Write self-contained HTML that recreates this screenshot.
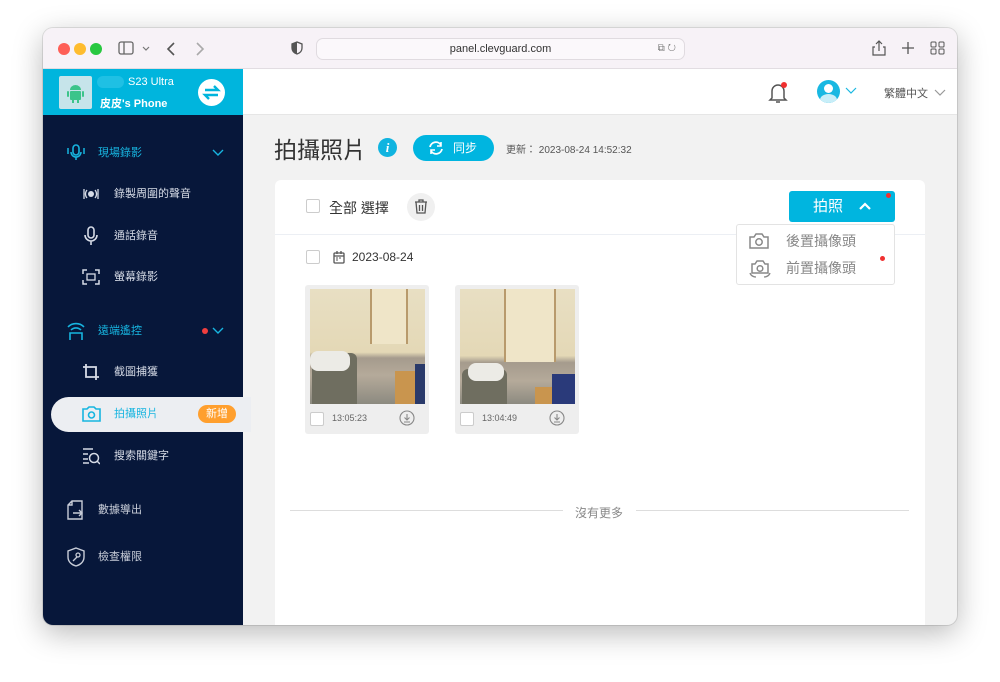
<!DOCTYPE html>
<html><head><meta charset="utf-8"><style>
*{box-sizing:border-box;margin:0;padding:0}
body{width:1000px;height:682px;background:#fff;font-family:"Liberation Sans","Noto Sans CJK TC",sans-serif;position:relative;overflow:hidden}
.win{position:absolute;left:43px;top:28px;width:914px;height:597px;border-radius:10px;overflow:hidden;box-shadow:0 8px 30px rgba(0,0,0,.28),0 0 0 1px rgba(0,0,0,.1);background:#f2f2f2}
.tb{position:absolute;left:0;top:0;width:914px;height:41px;background:#f7f2f7;border-bottom:1px solid #e2dde2}
.dot{position:absolute;top:15px;width:12px;height:12px;border-radius:50%}
.url{position:absolute;left:273px;top:10px;width:369px;height:22px;border:1px solid #e0dbe0;border-radius:7px;background:#fbf8fb;font-size:11px;color:#333;text-align:center;line-height:20px}
.side{position:absolute;left:0;top:41px;width:200px;height:556px;background:#07173a}
.shead{position:absolute;left:0;top:0;width:200px;height:46px;background:#00b5dd}
.ab{position:absolute;color:#fff;font-size:12px}
.mi{position:absolute;left:0;width:200px;height:20px;font-size:11px;color:#d6dbe6;line-height:20px}
.mi svg{position:absolute}
.main{position:absolute;left:200px;top:41px;width:714px;height:556px}
.hdr{position:absolute;left:0;top:0;width:714px;height:46px;background:#fff;border-bottom:1px solid #e6e6e6}
.card{position:absolute;left:32px;top:111px;width:650px;height:460px;background:#fff;border-radius:6px}
.cb{position:absolute;width:14px;height:14px;border:1px solid #ccc;border-radius:2px;background:#fff}
.ph{position:absolute;top:105px;width:124px;height:149px;background:#eeeeee;border-radius:3px}
.img{position:absolute;left:5px;top:4px;width:115px;height:115px;overflow:hidden;background:#e7dcc0}
</style></head><body>
<div class="win">
 <div class="tb">
  <div class="dot" style="left:15px;background:#fe5f57"></div>
  <div class="dot" style="left:31px;background:#febc2e"></div>
  <div class="dot" style="left:47px;background:#28c840"></div>
  <svg style="position:absolute;left:75px;top:13px" width="34" height="16"><rect x="1" y="1" width="14" height="12" rx="2" fill="none" stroke="#666" stroke-width="1.3"/><line x1="6" y1="1" x2="6" y2="13" stroke="#666" stroke-width="1.3"/><path d="M25 6l3 3 3-3" fill="none" stroke="#777" stroke-width="1.2"/></svg>
  <svg style="position:absolute;left:122px;top:13px" width="40" height="16"><path d="M9 2L3 8l6 6" fill="none" stroke="#555" stroke-width="1.6"/><path d="M32 2l6 6-6 6" fill="none" stroke="#aaa" stroke-width="1.6"/></svg>
  <svg style="position:absolute;left:248px;top:13px" width="12" height="14"><path d="M6 1L1 3v4c0 3 2 5 5 6 3-1 5-3 5-6V3z" fill="none" stroke="#555" stroke-width="1.3"/><path d="M6 1v12c-3-1-5-3-5-6V3z" fill="#555"/></svg>
  <div class="url">panel.clevguard.com<span style="position:absolute;right:8px;top:0;color:#777;font-size:10px">⧉ ↻</span></div>
  <svg style="position:absolute;left:828px;top:11px" width="80" height="18"><path d="M8 2v10M5 5l3-3 3 3M4 8H2v8h12V8h-2" fill="none" stroke="#555" stroke-width="1.2"/><path d="M37 3v12M31 9h12" stroke="#555" stroke-width="1.3"/><rect x="60" y="3" width="5" height="5" rx="1" fill="none" stroke="#555"/><rect x="68" y="3" width="5" height="5" rx="1" fill="none" stroke="#555"/><rect x="60" y="10" width="5" height="5" rx="1" fill="none" stroke="#555"/><rect x="68" y="10" width="5" height="5" rx="1" fill="none" stroke="#555"/></svg>
 </div>
 <div class="side">
  <div class="shead">
   <div style="position:absolute;left:16px;top:7px;width:33px;height:33px;background:#c6e4ea;border-radius:2px"><svg width="33" height="33"><path d="M11 14a5.5 5 0 0 1 11 0z" fill="#3cc48a"/><rect x="11" y="15" width="11" height="9" rx="1" fill="#3cc48a"/><rect x="8" y="15" width="2" height="6" rx="1" fill="#3cc48a"/><rect x="23" y="15" width="2" height="6" rx="1" fill="#3cc48a"/><rect x="13" y="23" width="2" height="4" fill="#3cc48a"/><rect x="18" y="23" width="2" height="4" fill="#3cc48a"/></svg></div>
   <div style="position:absolute;left:54px;top:7px;width:27px;height:12px;background:#1fc0e4;border-radius:6px"></div>
   <div class="ab" style="left:85px;top:7px;font-size:11px">S23 Ultra</div>
   <div class="ab" style="left:57px;top:26px;font-size:11px;font-weight:bold">皮皮's Phone</div>
   <div style="position:absolute;left:155px;top:10px;width:27px;height:27px;border-radius:50%;background:#fff"><svg width="27" height="27"><path d="M7 11h13l-4-4M20 16H7l4 4" fill="none" stroke="#00b5dd" stroke-width="2.4"/></svg></div>
  </div>
  <div class="mi" style="top:74px;color:#17b5e0"><svg style="left:23px;top:0" width="20" height="20"><rect x="7" y="2" width="6" height="10" rx="3" fill="none" stroke="#17b5e0" stroke-width="1.6"/><path d="M5 9a5 5 0 0 0 10 0M10 14v3M2 5v6M18 5v6" fill="none" stroke="#17b5e0" stroke-width="1.5"/></svg><span style="position:absolute;left:55px">現場錄影</span><svg style="left:169px;top:6px" width="12" height="8"><path d="M1 1l5 5 5-5" fill="none" stroke="#17b5e0" stroke-width="1.4"/></svg></div>
  <div class="mi" style="top:115px"><svg style="left:38px;top:1px" width="20" height="18"><circle cx="10" cy="9" r="3" fill="#d6dbe6"/><path d="M6 5a6 6 0 0 0 0 8M14 5a6 6 0 0 1 0 8M3 4v10M17 4v10" fill="none" stroke="#d6dbe6" stroke-width="1.3"/></svg><span style="position:absolute;left:71px">錄製周圍的聲音</span></div>
  <div class="mi" style="top:157px"><svg style="left:40px;top:0" width="16" height="20"><rect x="5" y="1" width="6" height="11" rx="3" fill="none" stroke="#d6dbe6" stroke-width="1.6"/><path d="M2 9a6 6 0 0 0 12 0M8 15v4" fill="none" stroke="#d6dbe6" stroke-width="1.6"/></svg><span style="position:absolute;left:71px">通話錄音</span></div>
  <div class="mi" style="top:198px"><svg style="left:39px;top:2px" width="18" height="16"><path d="M1 5V1h4M13 1h4v4M17 11v4h-4M5 15H1v-4" fill="none" stroke="#d6dbe6" stroke-width="1.5"/><rect x="5" y="5" width="8" height="6" fill="none" stroke="#d6dbe6" stroke-width="1.3"/></svg><span style="position:absolute;left:71px">螢幕錄影</span></div>
  <div class="mi" style="top:252px;color:#17b5e0"><svg style="left:24px;top:0" width="18" height="20"><path d="M1 6a11 11 0 0 1 16 0M4 9a7 7 0 0 1 10 0M3 19v-7h12v7" fill="none" stroke="#17b5e0" stroke-width="1.6"/></svg><span style="position:absolute;left:55px">遠端遙控</span><span style="position:absolute;left:159px;top:7px;width:6px;height:6px;border-radius:50%;background:#f03e3e"></span><svg style="left:169px;top:6px" width="12" height="8"><path d="M1 1l5 5 5-5" fill="none" stroke="#17b5e0" stroke-width="1.4"/></svg></div>
  <div class="mi" style="top:293px"><svg style="left:39px;top:1px" width="18" height="18"><path d="M4 1v13h13M1 4h13v13" fill="none" stroke="#d6dbe6" stroke-width="1.8"/></svg><span style="position:absolute;left:71px">截圖捕獲</span></div>
  <div style="position:absolute;left:8px;top:328px;width:200px;height:35px;background:#eceef2;border-radius:18px 0 0 18px"></div>
  <div class="mi" style="top:335px;color:#17b5e0"><svg style="left:39px;top:1px" width="19" height="17"><path d="M1 4h4l2-2h5l2 2h4v12H1z" fill="none" stroke="#17b5e0" stroke-width="1.6"/><circle cx="9.5" cy="10" r="3" fill="none" stroke="#17b5e0" stroke-width="1.6"/></svg><span style="position:absolute;left:71px">拍攝照片</span><span style="position:absolute;left:155px;top:1px;width:38px;height:18px;border-radius:9px;background:#ff9f2e;color:#fff;text-align:center;line-height:18px;font-size:11px">新增</span></div>
  <div class="mi" style="top:377px"><svg style="left:39px;top:1px" width="18" height="18"><path d="M1 2h10M1 7h5M1 12h5M1 16h6" stroke="#d6dbe6" stroke-width="1.4"/><circle cx="12" cy="11" r="4.5" fill="none" stroke="#d6dbe6" stroke-width="1.5"/><path d="M15 14l3 3" stroke="#d6dbe6" stroke-width="1.5"/></svg><span style="position:absolute;left:71px">搜索關鍵字</span></div>
  <div class="mi" style="top:431px;color:#c8cdd8"><svg style="left:24px;top:0" width="18" height="20"><path d="M5 1h10v18H1V5z M1 5h4V1" fill="none" stroke="#c8cdd8" stroke-width="1.4"/><path d="M6 13h9M12 10l3 3-3 3" fill="none" stroke="#c8cdd8" stroke-width="1.4"/></svg><span style="position:absolute;left:55px">數據導出</span></div>
  <div class="mi" style="top:478px;color:#c8cdd8"><svg style="left:24px;top:0" width="18" height="20"><path d="M9 1l8 3v6c0 5-4 8-8 9-4-1-8-4-8-9V4z" fill="none" stroke="#c8cdd8" stroke-width="1.4"/><circle cx="11" cy="8" r="2" fill="none" stroke="#c8cdd8" stroke-width="1.3"/><path d="M10 10l-4 4" stroke="#c8cdd8" stroke-width="1.3"/></svg><span style="position:absolute;left:55px">檢查權限</span></div>
 </div>
 <div class="main">
  <div class="hdr">
   <svg style="position:absolute;left:525px;top:12px" width="22" height="24"><path d="M4 17V10a6 6 0 0 1 12 0v7l2 2H2z M8 21h4" fill="none" stroke="#555" stroke-width="1.5"/><circle cx="16" cy="4" r="3" fill="#f03030"/></svg>
   <div style="position:absolute;left:574px;top:11px;width:23px;height:23px;border-radius:50%;background:#19b8e2;overflow:hidden"><div style="position:absolute;left:7px;top:4px;width:9px;height:9px;border-radius:50%;background:#fff"></div><div style="position:absolute;left:3px;top:14px;width:17px;height:12px;border-radius:50%;background:#c8eef8"></div></div>
   <svg style="position:absolute;left:602px;top:18px" width="12" height="8"><path d="M1 1l5 5 5-5" fill="none" stroke="#19b8e2" stroke-width="1.2"/></svg>
   <div style="position:absolute;left:641px;top:16px;font-size:11px;color:#555">繁體中文</div>
   <svg style="position:absolute;left:691px;top:20px" width="12" height="8"><path d="M1 1l5 5 5-5" fill="none" stroke="#999" stroke-width="1.2"/></svg>
  </div>
  <div style="position:absolute;left:31px;top:62px;font-size:23px;color:#333">拍攝照片</div>
  <div style="position:absolute;left:135px;top:69px;width:19px;height:19px;border-radius:50%;background:#10b4e0;color:#fff;font:italic bold 13px 'Liberation Serif',serif;text-align:center;line-height:19px">i</div>
  <div style="position:absolute;left:170px;top:66px;width:81px;height:26px;border-radius:13px;background:#00b5e0;color:#fff;font-size:12px;line-height:26px"><svg style="position:absolute;left:15px;top:6px" width="16" height="14"><path d="M2 6a6 6 0 0 1 11-2M14 8a6 6 0 0 1-11 2" fill="none" stroke="#fff" stroke-width="1.8"/><path d="M13 1v4h-4M3 13V9h4" fill="none" stroke="#fff" stroke-width="1.6"/></svg><span style="position:absolute;left:40px">同步</span></div>
  <div style="position:absolute;left:263px;top:72px;font-size:10px;color:#555">更新： 2023-08-24 14:52:32</div>
  <div class="card">
   <div class="cb" style="left:31px;top:19px"></div>
   <div style="position:absolute;left:54px;top:18px;font-size:14px;color:#333">全部 選擇</div>
   <div style="position:absolute;left:132px;top:13px;width:28px;height:28px;border-radius:50%;background:#f0f0f0"><svg width="28" height="28"><path d="M8 9h12M12 9V7h4v2M9 9l1 11h8l1-11M12.5 12v6M15.5 12v6" fill="none" stroke="#555" stroke-width="1.3"/></svg></div>
   <div style="position:absolute;left:0;top:54px;width:650px;height:1px;background:#eceff4"></div>
   <div style="position:absolute;left:514px;top:11px;width:106px;height:31px;border-radius:3px;background:#00b5df;color:#fff;font-size:15px;line-height:31px"><span style="position:absolute;left:24px">拍照</span><svg style="position:absolute;left:69px;top:11px" width="14" height="9"><path d="M2 7l5-5 5 5" fill="none" stroke="#fff" stroke-width="2.2"/></svg><span style="position:absolute;left:97px;top:2px;width:5px;height:5px;border-radius:50%;background:#f03030"></span></div>
   <div style="position:absolute;left:461px;top:44px;width:159px;height:61px;border:1px solid #e3e3e3;border-radius:3px;background:#fff;font-size:14px;color:#888">
    <svg style="position:absolute;left:12px;top:7px" width="20" height="18"><path d="M1 5h4l2-3h6l2 3h4v11H1z" fill="none" stroke="#888" stroke-width="1.5"/><circle cx="10" cy="10" r="3.2" fill="none" stroke="#888" stroke-width="1.5"/></svg>
    <span style="position:absolute;left:49px;top:6px">後置攝像頭</span>
    <svg style="position:absolute;left:12px;top:34px" width="22" height="20"><path d="M3 5h3l2-3h6l2 3h3v9H3z" fill="none" stroke="#888" stroke-width="1.5"/><circle cx="11" cy="9.5" r="2.8" fill="none" stroke="#888" stroke-width="1.5"/><path d="M1 14c1 3 4 4 6 4M21 14c-1 3-4 4-6 4" fill="none" stroke="#888" stroke-width="1.3"/></svg>
    <span style="position:absolute;left:49px;top:33px">前置攝像頭</span>
    <span style="position:absolute;left:143px;top:31px;width:5px;height:5px;border-radius:50%;background:#f03030"></span>
   </div>
   <div class="cb" style="left:31px;top:70px"></div>
   <svg style="position:absolute;left:58px;top:71px" width="12" height="13"><rect x="1" y="2" width="10" height="10" rx="1" fill="none" stroke="#555" stroke-width="1.3"/><path d="M1 5h10M4 0v3M8 0v3" stroke="#555" stroke-width="1.3"/><path d="M3 7h2M6 7h2M3 9h2" stroke="#555"/></svg>
   <div style="position:absolute;left:77px;top:70px;font-size:12px;color:#333">2023-08-24</div>
   <div class="ph" style="left:30px"><div class="img" style="background:linear-gradient(180deg,#e8dfc3 0,#e4d8b6 55%,#a59b8d 60%,#b5aa9a 75%,#8c8a80 100%)"><div style="position:absolute;left:60px;top:0;width:38px;height:55px;background:#efe5c8;border-left:2px solid #b89a6c;border-right:2px solid #b89a6c"></div><div style="position:absolute;left:2px;top:64px;width:45px;height:51px;background:#6f6e60;border-radius:6px 6px 0 0"></div><div style="position:absolute;left:0;top:62px;width:40px;height:20px;background:#ecebe6;border-radius:8px"></div><div style="position:absolute;left:85px;top:82px;width:30px;height:33px;background:#c9954e"></div><div style="position:absolute;left:105px;top:75px;width:10px;height:40px;background:#2a3a6a"></div></div><div class="cb" style="left:5px;top:127px"></div><div style="position:absolute;left:27px;top:128px;font-size:9px;color:#666">13:05:23</div><svg style="position:absolute;left:94px;top:125px" width="16" height="16"><circle cx="8" cy="8" r="7" fill="none" stroke="#888" stroke-width="1.1"/><path d="M8 4v6M5.5 7.5L8 10l2.5-2.5M5 12h6" fill="none" stroke="#888" stroke-width="1.1"/></svg></div>
   <div class="ph" style="left:180px"><div class="img" style="background:linear-gradient(180deg,#e8dfc3 0,#e4d8b6 58%,#a59b8d 64%,#b5aa9a 80%,#8c8a80 100%)"><div style="position:absolute;left:44px;top:0;width:52px;height:73px;background:#efe5c8;border-left:2px solid #b89a6c;border-right:2px solid #b89a6c"></div><div style="position:absolute;left:2px;top:80px;width:45px;height:35px;background:#6f6e60;border-radius:6px 6px 0 0"></div><div style="position:absolute;left:8px;top:74px;width:36px;height:18px;background:#ecebe6;border-radius:8px"></div><div style="position:absolute;left:75px;top:98px;width:20px;height:17px;background:#c9954e"></div><div style="position:absolute;left:92px;top:85px;width:23px;height:30px;background:#2a3a7a"></div></div><div class="cb" style="left:5px;top:127px"></div><div style="position:absolute;left:27px;top:128px;font-size:9px;color:#666">13:04:49</div><svg style="position:absolute;left:94px;top:125px" width="16" height="16"><circle cx="8" cy="8" r="7" fill="none" stroke="#888" stroke-width="1.1"/><path d="M8 4v6M5.5 7.5L8 10l2.5-2.5M5 12h6" fill="none" stroke="#888" stroke-width="1.1"/></svg></div>
   <div style="position:absolute;left:15px;top:330px;width:273px;height:1px;background:#ddd"></div>
   <div style="position:absolute;left:361px;top:330px;width:273px;height:1px;background:#ddd"></div>
   <div style="position:absolute;left:300px;top:324px;font-size:12px;color:#888">沒有更多</div>
  </div>
 </div>
</div>
</body></html>
